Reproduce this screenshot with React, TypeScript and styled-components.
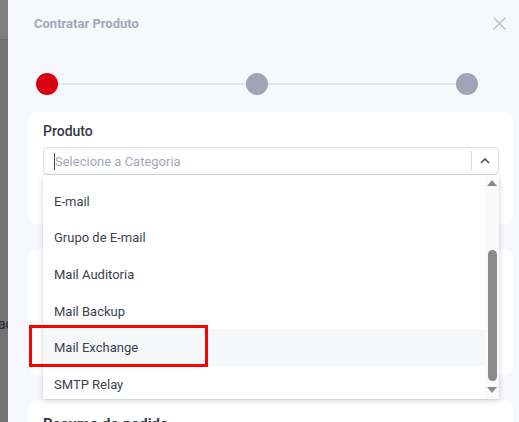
import React from "react";
import styled, { createGlobalStyle } from "styled-components";

const GlobalStyle = createGlobalStyle`
  html, body { margin: 0; padding: 0; }
  body {
    font-family: Roboto, "Liberation Sans", sans-serif;
    overflow: hidden;
    background: #727272;
  }
  * { box-sizing: border-box; }
`;

const Page = styled.div`
  position: relative;
  display: flex;
  width: 519px;
  height: 422px;
  overflow: hidden;
`;

const BackdropStrip = styled.div`
  width: 8px;
  flex: none;
  display: flex;
  flex-direction: column;
  overflow: hidden;
`;

const BackdropTop = styled.div`
  height: 40px;
  flex: none;
  background: #7e7e7e;
  border-bottom: 1px solid #6c6c6c;
`;

const BackdropBody = styled.div`
  flex: 1;
  background: #727272;
  padding-top: 276px;
  white-space: nowrap;
  font-size: 14px;
  line-height: 16px;
  color: #262626;
  text-indent: -2px;
`;

const Modal = styled.div`
  flex: 1;
  background: #f7f8fc;
  padding: 0 6px 0 21px;
  display: flex;
  flex-direction: column;
  overflow: hidden;
  & > * { flex-shrink: 0; }
`;

const Header = styled.div`
  height: 47px;
  display: flex;
  align-items: center;
  justify-content: space-between;
  padding: 0 7px 0 5px;
`;

const Title = styled.h2`
  margin: 0;
  font-size: 13px;
  font-weight: 700;
  color: #a4a7b9;
`;

const CloseButton = styled.button`
  border: none;
  background: none;
  padding: 0;
  width: 13px;
  height: 13px;
  display: flex;
`;

const Stepper = styled.div`
  display: flex;
  align-items: center;
  height: 22px;
  margin: 26px 0 17px;
  padding: 0 35px 0 7px;
`;

const Dot = styled.span<{ $active?: boolean }>`
  width: 22px;
  height: 22px;
  border-radius: 50%;
  flex: none;
  background: ${(p) => (p.$active ? "#d90011" : "#a1a3b6")};
`;

const StepLine = styled.span`
  flex: 1;
  height: 2px;
  background: #e4e5eb;
`;

const Cards = styled.div`
  display: flex;
  flex-direction: column;
  gap: 25px;
`;

const Card = styled.div<{ $height?: number }>`
  background: #ffffff;
  border-radius: 8px;
  padding: 9px 14px 0;
  height: ${(p) => (p.$height ? `${p.$height}px` : "auto")};
  flex: none;
`;

const Label = styled.div`
  font-size: 14px;
  font-weight: 500;
  line-height: 20px;
  color: #353849;
  margin-bottom: 6px;
`;

const SectionTitle = styled.div`
  font-size: 15px;
  font-weight: 700;
  line-height: 20px;
  color: #353849;
  padding-top: 5px;
`;

const SelectWrap = styled.div`
  position: relative;
`;

const SelectBox = styled.div`
  height: 28px;
  border: 1px solid #dcdde4;
  border-radius: 5px;
  display: flex;
  align-items: center;
  padding-left: 10px;
`;

const Caret = styled.span`
  width: 1px;
  height: 17px;
  background: #4a4a4a;
  flex: none;
`;

const Placeholder = styled.span`
  flex: 1;
  font-size: 13px;
  color: #a4a7b9;
`;

const Divider = styled.span`
  width: 1px;
  height: 20px;
  background: #dcdde4;
  flex: none;
`;

const Indicator = styled.span`
  width: 26px;
  display: flex;
  justify-content: center;
  align-items: center;
`;

const Menu = styled.div`
  position: absolute;
  top: 100%;
  left: 0;
  right: 0;
  height: 224px;
  background: #ffffff;
  box-shadow: 0 2px 6px rgba(0, 0, 0, 0.16), 0 0 1px rgba(0, 0, 0, 0.12);
  display: flex;
  z-index: 5;
`;

const List = styled.div`
  flex: 1;
  overflow: hidden;
  padding-top: 8px;
`;

const Option = styled.div<{ $hover?: boolean }>`
  height: 36.6px;
  display: flex;
  align-items: center;
  padding-left: 11px;
  font-size: 13px;
  color: #3d3f50;
  background: ${(p) => (p.$hover ? "#f6f7f9" : "transparent")};
`;

const ScrollBar = styled.div`
  width: 14px;
  flex: none;
  background: #fafafa;
  display: flex;
  flex-direction: column;
  align-items: center;
`;

const Arrow = styled.span<{ $down?: boolean }>`
  width: 0;
  height: 0;
  border-left: 5px solid transparent;
  border-right: 5px solid transparent;
  ${(p) =>
    p.$down
      ? "border-top: 6px solid #8a8a8a;"
      : "border-bottom: 6px solid #8a8a8a;"}
  margin-top: ${(p) => (p.$down ? "6px" : "5px")};
`;

const Thumb = styled.span`
  width: 9px;
  height: 131px;
  border-radius: 5px;
  background: #8a8a8a;
  margin-top: 64px;
`;

const Highlight = styled.div`
  position: absolute;
  left: 29px;
  top: 325px;
  width: 179px;
  height: 42px;
  border: 3px solid #ff0000;
  pointer-events: none;
  z-index: 10;
`;

const options = [
  "E-mail",
  "Grupo de E-mail",
  "Mail Auditoria",
  "Mail Backup",
  "Mail Exchange",
  "SMTP Relay",
];

export default function App() {
  return (
    <>
      <GlobalStyle />
      <Page>
        <BackdropStrip>
          <BackdropTop />
          <BackdropBody>ac</BackdropBody>
        </BackdropStrip>
        <Modal>
          <Header>
            <Title>Contratar Produto</Title>
            <CloseButton aria-label="Fechar">
              <svg width="13" height="13" viewBox="0 0 13 13">
                <path
                  d="M1 1 L12 12 M12 1 L1 12"
                  stroke="#bfc0c8"
                  strokeWidth="1.5"
                  strokeLinecap="round"
                />
              </svg>
            </CloseButton>
          </Header>
          <Stepper>
            <Dot $active />
            <StepLine />
            <Dot />
            <StepLine />
            <Dot />
          </Stepper>
          <Cards>
            <Card $height={112}>
              <Label>Produto</Label>
              <SelectWrap>
                <SelectBox>
                  <Caret />
                  <Placeholder>Selecione a Categoria</Placeholder>
                  <Divider />
                  <Indicator>
                    <svg width="10" height="6" viewBox="0 0 10 6">
                      <path
                        d="M1 5 L5 1 L9 5"
                        fill="none"
                        stroke="#4d4d4d"
                        strokeWidth="1.6"
                      />
                    </svg>
                  </Indicator>
                </SelectBox>
                <Menu>
                  <List>
                    {options.map((o) => (
                      <Option key={o} $hover={o === "Mail Exchange"}>
                        {o}
                      </Option>
                    ))}
                  </List>
                  <ScrollBar>
                    <Arrow />
                    <Thumb />
                    <Arrow $down />
                  </ScrollBar>
                </Menu>
              </SelectWrap>
            </Card>
            <Card $height={126} />
            <Card $height={60}>
              <SectionTitle>Resumo do pedido</SectionTitle>
            </Card>
          </Cards>
        </Modal>
        <Highlight />
      </Page>
    </>
  );
}
